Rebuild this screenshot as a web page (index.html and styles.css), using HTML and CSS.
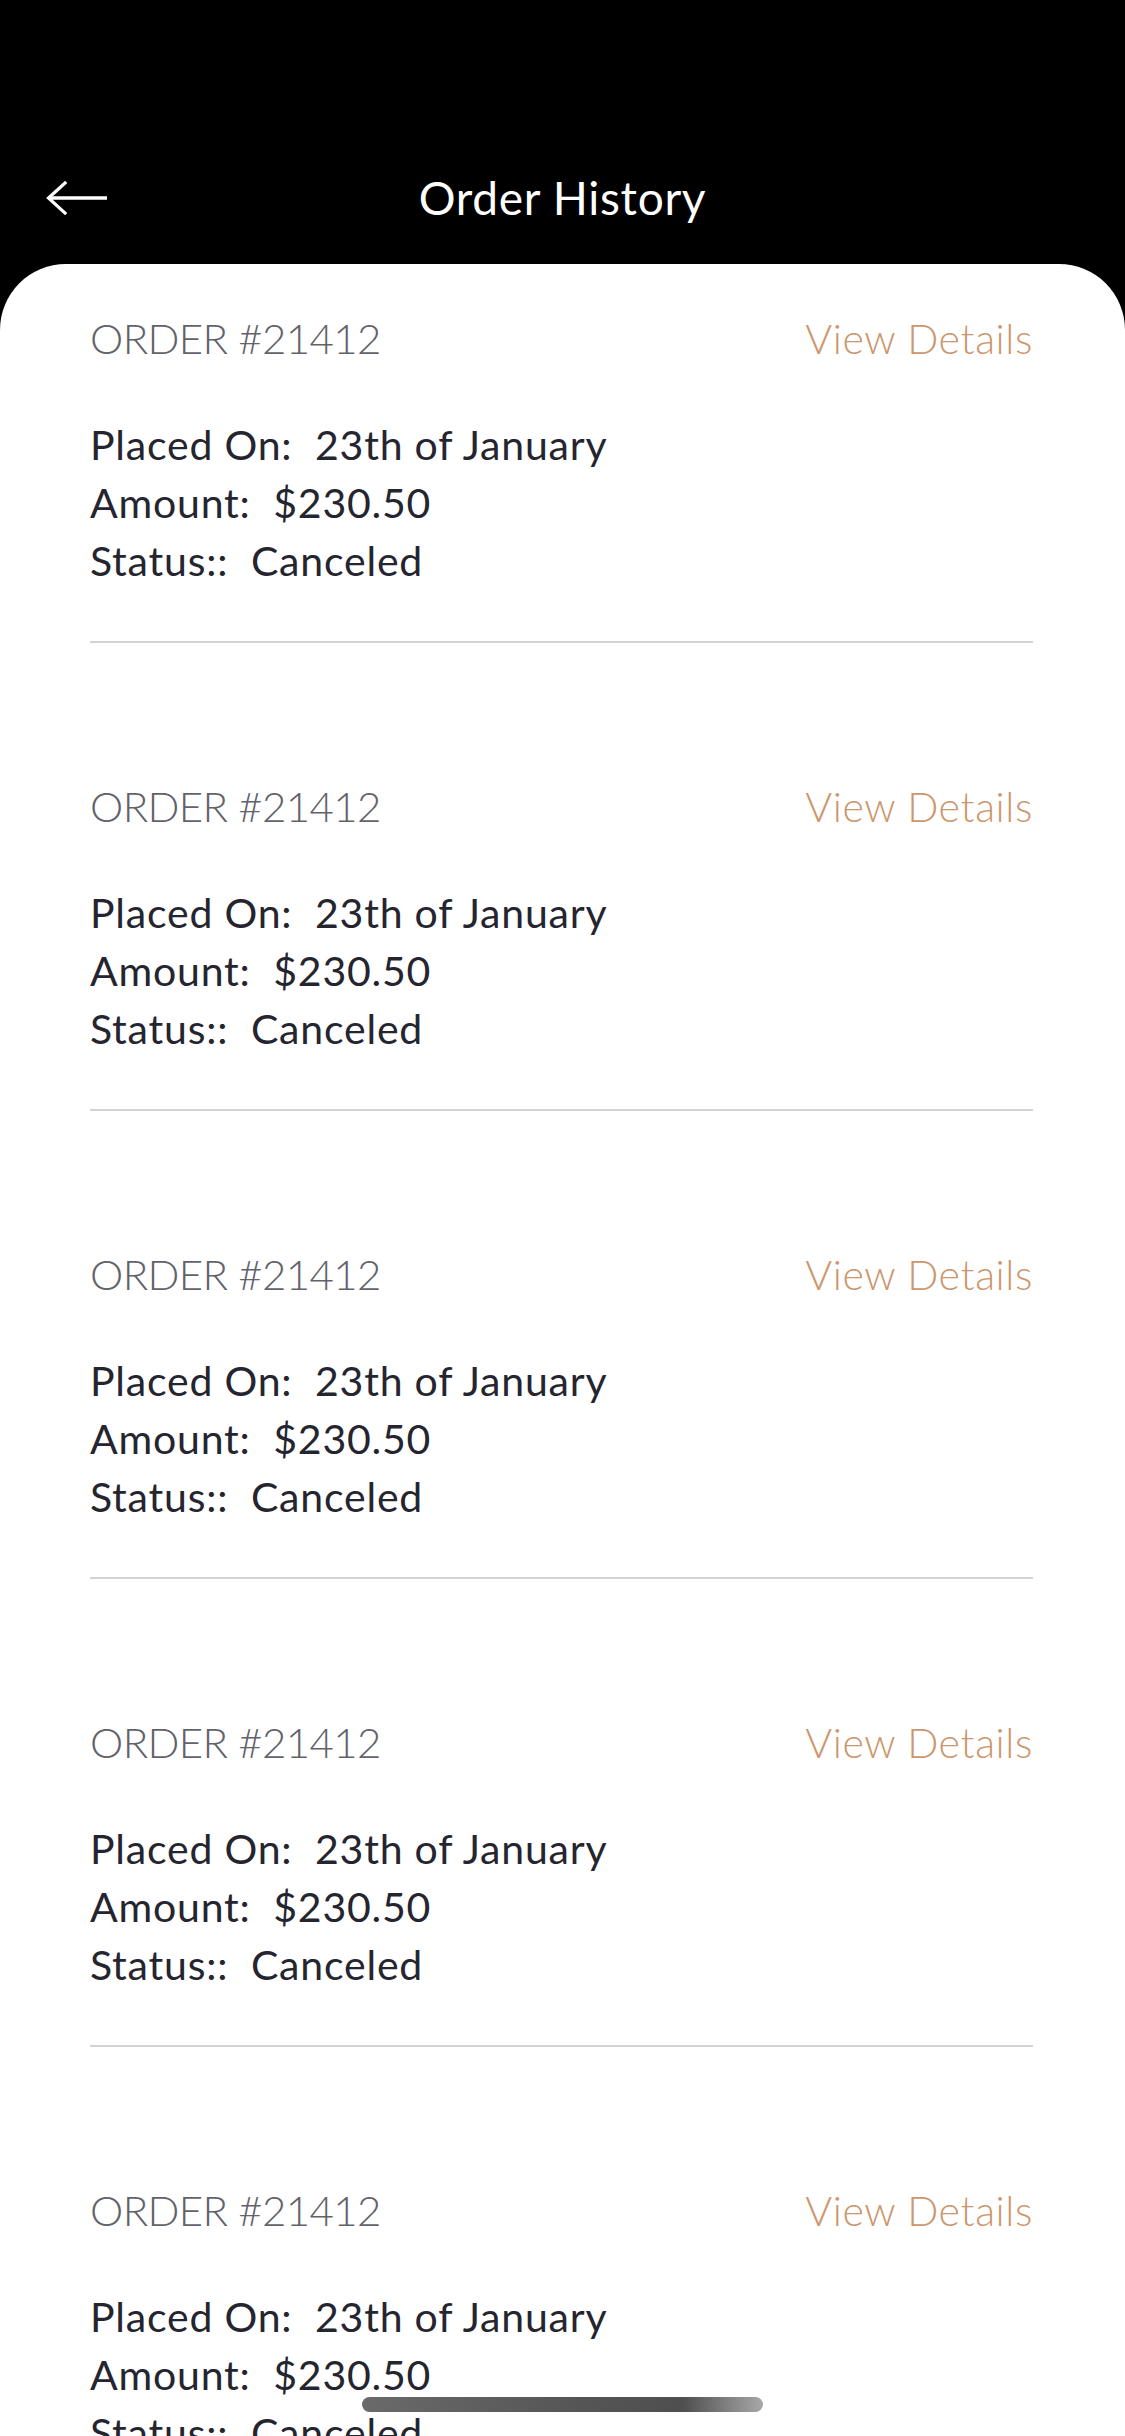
FILE: index.html
```html
<!DOCTYPE html>
<html lang="en">
<head>
<meta charset="utf-8">
<title>Order History</title>
<link rel="stylesheet" href="styles.css">
</head>
<body>
<div class="screen">
  <header class="topbar">
    <div class="back">
      <svg width="62" height="34" viewBox="0 0 62 34" aria-hidden="true">
        <path d="M2 17 H61" stroke="#fff" stroke-width="3.6" fill="none"/>
        <path d="M19 2 L2.5 17 L19 32" stroke="#fff" stroke-width="3.2" fill="none" stroke-linecap="square"/>
      </svg>
    </div>
    <h1 class="title">Order History</h1>
    <div class="spacer"></div>
  </header>

  <main class="sheet">
    <section class="order">
      <div class="order-head">
        <span class="order-no">ORDER #21412</span>
        <span class="view">View Details</span>
      </div>
      <div class="details">
        <div class="line">Placed On:&nbsp; 23th of January</div>
        <div class="line">Amount:&nbsp; $230.50</div>
        <div class="line">Status::&nbsp; Canceled</div>
      </div>
    </section>
    <section class="order">
      <div class="order-head">
        <span class="order-no">ORDER #21412</span>
        <span class="view">View Details</span>
      </div>
      <div class="details">
        <div class="line">Placed On:&nbsp; 23th of January</div>
        <div class="line">Amount:&nbsp; $230.50</div>
        <div class="line">Status::&nbsp; Canceled</div>
      </div>
    </section>
    <section class="order">
      <div class="order-head">
        <span class="order-no">ORDER #21412</span>
        <span class="view">View Details</span>
      </div>
      <div class="details">
        <div class="line">Placed On:&nbsp; 23th of January</div>
        <div class="line">Amount:&nbsp; $230.50</div>
        <div class="line">Status::&nbsp; Canceled</div>
      </div>
    </section>
    <section class="order">
      <div class="order-head">
        <span class="order-no">ORDER #21412</span>
        <span class="view">View Details</span>
      </div>
      <div class="details">
        <div class="line">Placed On:&nbsp; 23th of January</div>
        <div class="line">Amount:&nbsp; $230.50</div>
        <div class="line">Status::&nbsp; Canceled</div>
      </div>
    </section>
    <section class="order">
      <div class="order-head">
        <span class="order-no">ORDER #21412</span>
        <span class="view">View Details</span>
      </div>
      <div class="details">
        <div class="line">Placed On:&nbsp; 23th of January</div>
        <div class="line">Amount:&nbsp; $230.50</div>
        <div class="line">Status::&nbsp; Canceled</div>
      </div>
    </section>
  </main>

  <div class="home-indicator"></div>
</div>
</body>
</html>
```

FILE: styles.css
```css
html, body {
  margin: 0;
  padding: 0;
  background: #000;
  overflow: hidden;
}

body {
  width: 1125px;
  height: 2436px;
  font-family: "Lato", "Noto Sans", sans-serif;
}

.screen {
  position: relative;
  width: 1125px;
  height: 2436px;
  overflow: hidden;
  background: #000;
}

.topbar {
  height: 96px;
  padding: 168px 0 0 0;
  display: grid;
  grid-template-columns: 1fr auto 1fr;
  align-items: start;
}

.back {
  height: 60px;
  padding-left: 46px;
  display: flex;
  align-items: center;
}

.back svg {
  display: block;
}

.title {
  margin: 0;
  font-weight: 400;
  font-size: 46px;
  line-height: 60px;
  color: #fff;
  letter-spacing: 0.7px;
}

.sheet {
  background: #fff;
  border-radius: 66px 66px 0 0;
  padding: 48px 92px 0 90px;
  display: flex;
  flex-direction: column;
  gap: 137px;
  min-height: 2200px;
}

.order {
  border-bottom: 2px solid #d3d3d6;
  padding-bottom: 51px;
}

.order-head {
  display: flex;
  justify-content: space-between;
  align-items: baseline;
  height: 52px;
}

.order-no {
  font-size: 42px;
  font-weight: 300;
  line-height: 52px;
  color: #62626a;
  letter-spacing: -0.6px;
}

.view {
  font-size: 41px;
  font-weight: 300;
  line-height: 52px;
  color: #cc966c;
  letter-spacing: 0.6px;
}

.details {
  margin-top: 52px;
}

.line {
  font-size: 41px;
  line-height: 58px;
  color: #25252f;
  letter-spacing: 0.8px;
  white-space: nowrap;
}

.home-indicator {
  position: absolute;
  left: 362px;
  top: 2397px;
  width: 401px;
  height: 15px;
  border-radius: 8px;
  background: linear-gradient(90deg, #6a6a6a 0%, #555 55%, #4f4f4f 80%, #a8a8a8 100%);
}
```
